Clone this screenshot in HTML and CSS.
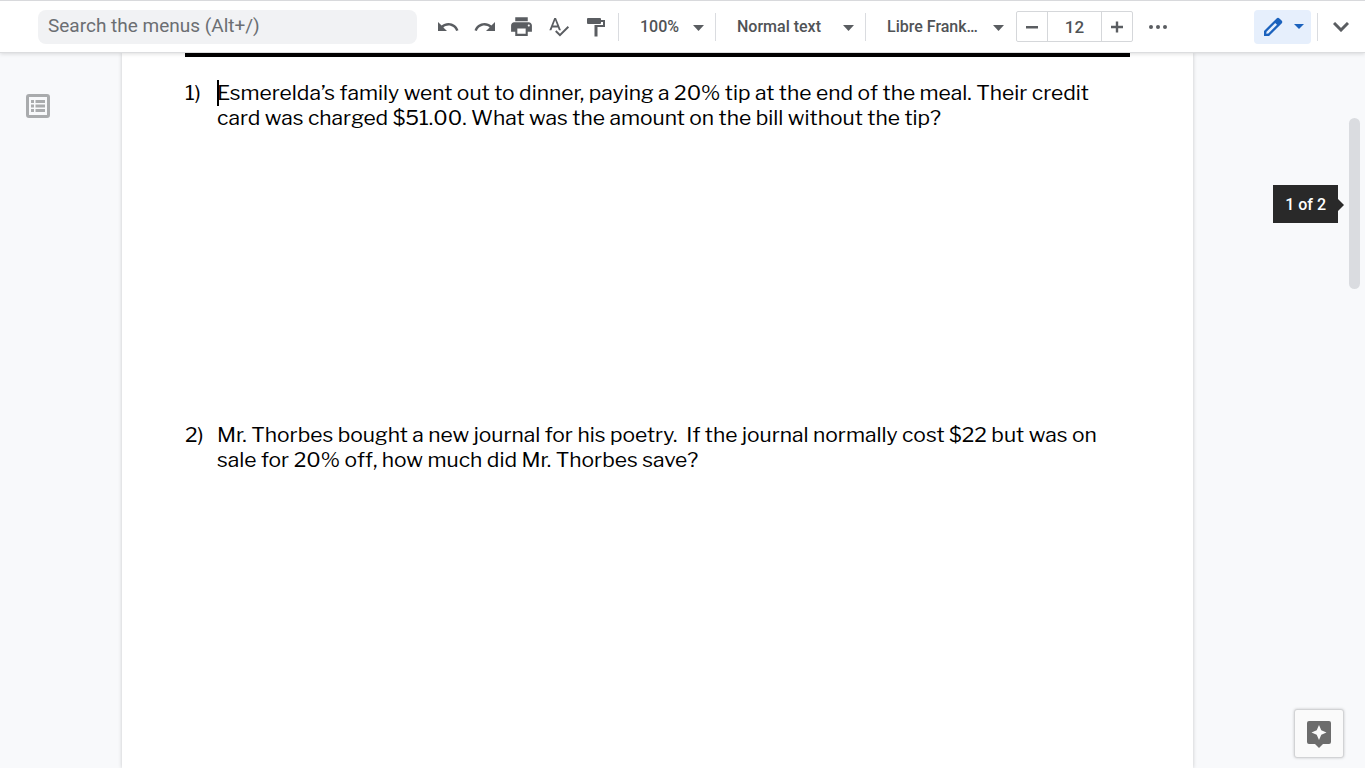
FILE: index.html
```html
<!DOCTYPE html>
<html lang="en">
<head>
  <meta charset="UTF-8">
  <meta name="viewport" content="width=device-width, initial-scale=1.0">
  <title>Percent Problems</title>
  <link rel="stylesheet" href="styles.css">
</head>
<body>
  <header class="toolbar">
    <input class="search" type="text" placeholder="Search the menus (Alt+/)" aria-label="Search the menus">
    <div class="tools">
      <button class="tool" type="button" aria-label="Undo">
        <svg width="24" height="24" viewBox="0 0 24 24"><path d="M12.500 8c-2.650 0-5.050.99-6.900 2.600L2 7v9h9l-3.620-3.620c1.390-1.160 3.160-1.880 5.120-1.880 3.540 0 6.550 2.310 7.600 5.500l2.370-.78C21.080 11.030 17.150 8 12.500 8z"/></svg>
      </button>
      <button class="tool" type="button" aria-label="Redo">
        <svg width="24" height="24" viewBox="0 0 24 24"><path d="M18.400 10.600C16.550 8.990 14.150 8 11.500 8c-4.650 0-8.580 3.030-9.960 7.220L3.900 16c1.050-3.190 4.050-5.500 7.600-5.500 1.950 0 3.730.72 5.120 1.880L13 16h9V7l-3.600 3.600z"/></svg>
      </button>
      <button class="tool" type="button" aria-label="Print">
        <svg width="25" height="25" viewBox="0 0 24 24"><path d="M19 8H5c-1.660 0-3 1.340-3 3v6h4v4h12v-4h4v-6c0-1.660-1.340-3-3-3zm-3 11H8v-5h8v5zm3-7c-.55 0-1-.45-1-1s.45-1 1-1 1 .45 1 1-.45 1-1 1zm-1-9H6v4h12V3z"/></svg>
      </button>
      <button class="tool" type="button" aria-label="Spelling and grammar check">
        <svg width="23" height="23" viewBox="0 0 24 24"><path d="M12.450 16h2.090L9.430 3H7.570L2.460 16h2.090l1.120-3h5.640l1.140 3zm-6.020-5L8.500 5.480 10.570 11H6.430zm15.160.590l-8.090 8.090L9.830 16l-1.410 1.410 5.090 5.090L23 13l-1.410-1.410z"/></svg>
      </button>
      <button class="tool" type="button" aria-label="Paint format">
        <svg width="24" height="24" viewBox="0 0 24 24"><path d="M4 3h12a1 1 0 0 1 1 1v1h4v7h-7.500v9.500h-3V10H19V7h-2v1a1 1 0 0 1-1 1H4a1 1 0 0 1-1-1V4a1 1 0 0 1 1-1z"/></svg>
      </button>
    </div>
    <span class="divider"></span>
    <div class="dropdown zoom">
      <select aria-label="Zoom"><option>100%</option><option>125%</option></select>
      <svg class="arrow" width="11" height="6" viewBox="0 0 11 6"><path d="M0 0h11L5.500 6z"/></svg>
    </div>
    <span class="divider"></span>
    <div class="dropdown">
      <select aria-label="Styles"><option>Normal text</option><option>Title</option></select>
      <svg class="arrow" width="11" height="6" viewBox="0 0 11 6"><path d="M0 0h11L5.500 6z"/></svg>
    </div>
    <span class="divider"></span>
    <div class="dropdown">
      <select aria-label="Font"><option>Libre Frank…</option><option>Arial</option></select>
      <svg class="arrow" width="11" height="6" viewBox="0 0 11 6"><path d="M0 0h11L5.500 6z"/></svg>
    </div>
    <div class="font-size">
      <button type="button" aria-label="Decrease font size">
        <svg width="12" height="12" viewBox="0 0 12 12"><path d="M0 5h12v2.500H0z"/></svg>
      </button>
      <input type="text" value="12" aria-label="Font size">
      <button type="button" aria-label="Increase font size">
        <svg width="12" height="12" viewBox="0 0 12 12"><path d="M4.800 0.500h2.400v4.300H12v2.400H7.200v4.300H4.800V7.200H0V4.800h4.800z"/></svg>
      </button>
    </div>
    <button class="tool more" type="button" aria-label="More">
      <svg width="18" height="4" viewBox="0 0 18 4"><circle cx="2" cy="2" r="2"/><circle cx="9" cy="2" r="2"/><circle cx="16" cy="2" r="2"/></svg>
    </button>
    <button class="mode" type="button" aria-label="Editing mode">
      <svg width="22" height="22" viewBox="0 0 22 22"><path fill-rule="evenodd" d="M2 20v-5L14.600 2.400a2 2 0 0 1 2.800 0l2.200 2.200a2 2 0 0 1 0 2.800L7 20zM4.300 17.700l2-.2L15 8.800 13.200 7 4.500 15.700z"/></svg>
      <svg width="10" height="5" viewBox="0 0 10 5"><path d="M0 0h10L5 5z"/></svg>
    </button>
    <span class="divider"></span>
    <button class="tool hide" type="button" aria-label="Hide the menus">
      <svg width="16" height="10" viewBox="0 0 16 10"><path d="M1 1l7 7 7-7"/></svg>
    </button>
  </header>

  <main class="editor">
    <aside class="outline">
      <button type="button" aria-label="Show document outline">
        <svg width="24" height="24" viewBox="0 0 24 24"><rect x="1.500" y="1.500" width="21" height="21" rx="1.500"/><path d="M5 7.500h3M9.500 7.500H19M5 12h3M9.500 12H19M5 16.500h3M9.500 16.500H19"/></svg>
      </button>
    </aside>
    <article class="page">
      <hr>
      <ol class="questions">
        <li>
          <span>1)</span>
          <p><span class="caret"></span>Esmerelda’s family went out to dinner, paying a 20% tip at the end of the meal. Their credit card was charged $51.00. What was the amount on the bill without the tip?</p>
        </li>
        <li>
          <span>2)</span>
          <p>Mr. Thorbes bought a new journal for his poetry. &nbsp;If the journal normally cost $22 but was on sale for 20% off, how much did Mr. Thorbes save?</p>
        </li>
      </ol>
    </article>
    <div class="rail">
      <div class="page-count">1 of 2</div>
      <div class="thumb"></div>
      <button class="explore" type="button" aria-label="Explore">
        <svg width="26" height="28" viewBox="0 0 26 28"><path fill-rule="evenodd" d="M3 1h20a2 2 0 0 1 2 2v19a2 2 0 0 1-2 2h-6l-4 4-4-4H3a2 2 0 0 1-2-2V3a2 2 0 0 1 2-2zm10 4l-2.300 5.200L5.500 12.500l5.200 2.300L13 20l2.300-5.200 5.200-2.300-5.200-2.300z"/></svg>
      </button>
    </div>
  </main>
</body>
</html>
```
FILE: styles.css
```css
* { box-sizing: border-box; }
body { margin: 0; height: 100vh; display: flex; flex-direction: column; overflow: hidden; background: #f8f9fb; font-family: Roboto, Arial, sans-serif; color: #505356; }
button { border: 0; padding: 0; background: none; display: flex; align-items: center; justify-content: center; cursor: pointer; }
svg { fill: #5a5d61; flex: none; }

.toolbar { position: relative; z-index: 1; display: flex; align-items: center; height: 53px; flex: none; padding: 0 6px 0 38px; background: #fff; border-top: 1px solid #d8d9dc; border-bottom: 1px solid #dcdddf; box-shadow: 0 1px 4px #0002; }
.search { flex: 0 1 379px; min-width: 0; height: 34px; margin-right: 12px; padding: 0 10px 2px; border: 0; border-radius: 8px; background: #f1f2f4; font: 19px Roboto, Arial, sans-serif; }
.search::placeholder { color: #6b6e72; }
.tools { display: flex; }
.tool { width: 37px; height: 34px; flex: none; }
.divider { width: 1px; height: 28px; margin: 0 4px; flex: none; background: #dadce0; }

.dropdown { position: relative; width: 141px; flex: none; }
.dropdown.zoom { width: 88px; }
.dropdown select { width: 100%; height: 34px; padding: 0 20px 0 17px; border: 0; background: none; appearance: none; font: 500 16px Roboto, Arial, sans-serif; color: #505356; }
.arrow { position: absolute; right: 7px; top: 15px; pointer-events: none; }

.font-size { display: flex; width: 117px; height: 31px; flex: none; margin: 0 6px 0 5px; border: 1px solid #d5d7da; border-radius: 2px; }
.font-size button { width: 30px; }
.font-size input { flex: 1; min-width: 0; padding: 0; border: 1px solid #d5d7da; border-width: 0 1px; text-align: center; font: 500 17px Roboto, Arial, sans-serif; color: #505356; }
.mode { width: 57px; height: 34px; flex: none; gap: 10px; margin-left: auto; margin-right: 2px; border-radius: 4px; background: #e6effc; }
.mode svg { fill: #1b62bd; }
.hide svg { fill: none; stroke: #5a5d61; stroke-width: 3; }

.editor { flex: 1; min-height: 0; display: flex; }
.outline { width: 122px; flex: none; padding: 41px 26px; }
.outline svg { fill: none; stroke: #a9abad; stroke-width: 3; }
.page { flex: 1; min-width: 0; padding: 0 63px; background: #fff; box-shadow: 0 0 4px #0003; }
.page hr { height: 4px; margin: 0; border: 0; background: #000; }

.questions { margin: 0; padding: 23px 0 0; list-style: none; font: 21px/25px "Libre Franklin", "Liberation Sans", Arial, sans-serif; color: #000; }
.questions li { display: grid; grid-template-columns: 32px 1fr; min-height: 342px; }
.questions p { position: relative; margin: 0; }
.caret { position: absolute; left: 0; top: 0; width: 2px; height: 26px; background: #000; }

.rail { position: relative; width: 172px; flex: none; }
.page-count { position: absolute; right: 27px; top: 132px; padding: 1px 12px 0; background: #292929; color: #fff; font-size: 16px; font-weight: 500; line-height: 37px; }
.page-count::after { content: ""; position: absolute; left: 100%; top: 14px; border: 6px solid transparent; border-left-color: #292929; border-right: 0; }
.thumb { position: absolute; right: 5px; top: 65px; width: 11px; height: 171px; border-radius: 6px; background: #dadce0; }
.explore { position: absolute; right: 21px; bottom: 10px; width: 50px; height: 49px; border: 1px solid #d2d3d5; border-radius: 3px; background: #fafafa; box-shadow: 0 0 3px #0003; }
.explore svg { fill: #6c6c6c; }
```
